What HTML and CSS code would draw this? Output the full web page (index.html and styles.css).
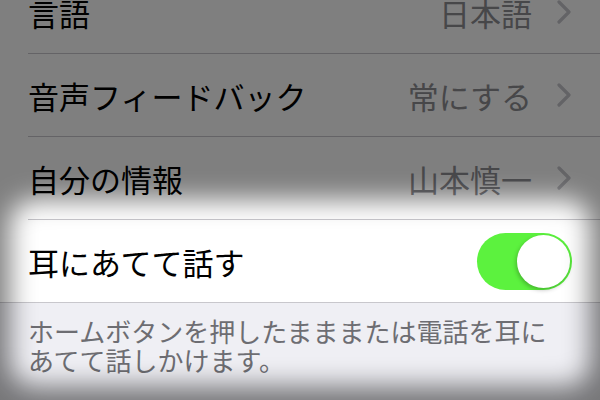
FILE: index.html
```html
<!DOCTYPE html>
<html lang="ja">
<head>
<meta charset="utf-8">
<link rel="stylesheet" href="styles.css">
</head>
<body>
<div class="screen">
  <div class="group">
    <div class="row">
      <span class="label">言語</span>
      <span class="value">日本語</span>
      <svg class="chev" width="14" height="24" viewBox="0 0 14 24"><polyline points="2,2 12,12 2,22" fill="none" stroke="#c7c7cc" stroke-width="3.2" stroke-linecap="round" stroke-linejoin="round"/></svg>
    </div>
    <div class="row">
      <span class="label">音声フィードバック</span>
      <span class="value">常にする</span>
      <svg class="chev" width="14" height="24" viewBox="0 0 14 24"><polyline points="2,2 12,12 2,22" fill="none" stroke="#c7c7cc" stroke-width="3.2" stroke-linecap="round" stroke-linejoin="round"/></svg>
    </div>
    <div class="row">
      <span class="label">自分の情報</span>
      <span class="value">山本慎一</span>
      <svg class="chev" width="14" height="24" viewBox="0 0 14 24"><polyline points="2,2 12,12 2,22" fill="none" stroke="#c7c7cc" stroke-width="3.2" stroke-linecap="round" stroke-linejoin="round"/></svg>
    </div>
    <div class="row last">
      <span class="label">耳にあてて話す</span>
      <div class="switch"><div class="knob"></div></div>
    </div>
  </div>
  <div class="footer">ホームボタンを押したまままたは電話を耳に<br>あてて話しかけます。</div>
  <div class="spotlight"></div>
</div>
</body>
</html>
```
FILE: styles.css
```css
html, body {
  margin: 0;
  padding: 0;
  background: #efeff4;
  overflow: hidden;
}
.screen {
  position: relative;
  width: 600px;
  height: 400px;
  overflow: hidden;
  font-family: "Noto Sans CJK JP", "Noto Sans", sans-serif;
}
.group {
  margin-top: -29px;
  background: #fff;
  border-bottom: 1px solid #c8c7cc;
}
.row {
  display: flex;
  align-items: center;
  height: 82px;
  margin-left: 28px;
  padding-right: 29px;
  border-bottom: 1px solid #c8c7cc;
}
.row.last {
  border-bottom: none;
  padding-right: 28px;
}
.label {
  font-size: 31px;
  color: #000;
  white-space: nowrap;
}
.value {
  margin-left: auto;
  font-size: 31px;
  color: #8e8e93;
  white-space: nowrap;
}
.chev {
  margin-left: 25px;
  flex: none;
}
.switch {
  margin-left: auto;
  width: 95px;
  height: 57px;
  border-radius: 29px;
  background: #5cf23e;
  display: flex;
  align-items: center;
  justify-content: flex-end;
  padding: 0 2px;
  box-sizing: border-box;
}
.knob {
  width: 53px;
  height: 53px;
  border-radius: 50%;
  background: #fff;
  box-shadow: -1px 2px 4px rgba(0, 0, 0, 0.25);
}
.footer {
  padding: 13px 28px;
  font-size: 26px;
  line-height: 29px;
  color: #6d6d72;
  white-space: nowrap;
}
.spotlight {
  position: absolute;
  left: 10px;
  top: 200px;
  width: 580px;
  height: 186px;
  border-radius: 24px;
  box-shadow: 0 0 0 1200px rgba(0, 0, 0, 0.5);
  filter: blur(13px);
  pointer-events: none;
}
```
